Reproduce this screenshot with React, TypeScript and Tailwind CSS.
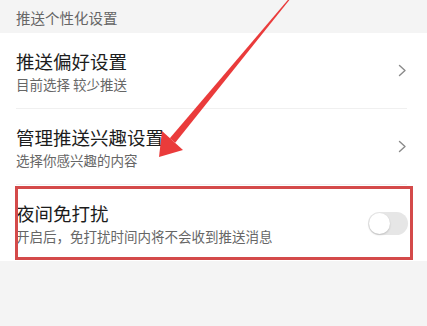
import React from "react";

const rows = [
  { title: "推送偏好设置", sub: "目前选择 较少推送", kind: "link" },
  { title: "管理推送兴趣设置", sub: "选择你感兴趣的内容", kind: "link" },
  { title: "夜间免打扰", sub: "开启后，免打扰时间内将不会收到推送消息", kind: "switch" },
];

function Chevron() {
  return (
    <svg width="9" height="13" viewBox="0 0 9 13" fill="none" className="shrink-0">
      <path d="M1.5 1.5 L7 6.5 L1.5 11.5" stroke="#8a8a8a" strokeWidth="1.4" strokeLinecap="round" strokeLinejoin="round" />
    </svg>
  );
}

function Toggle() {
  return (
    <div className="relative h-[23px] w-[40px] shrink-0 rounded-full bg-[#e6e6e6]">
      <div className="absolute left-[1px] top-[1px] size-[21px] rounded-full bg-white shadow-[0_1px_2px_rgba(0,0,0,0.18)]" />
    </div>
  );
}

export default function App() {
  return (
    <div
      className="relative h-[326px] w-[427px] overflow-hidden bg-[#f4f4f4]"
      style={{ fontFamily: '"Noto Sans CJK SC", "Noto Sans", sans-serif' }}
    >
      <div className="flex h-[33px] items-center pl-4 pt-[3px] text-[14.5px] text-[#666]">推送个性化设置</div>

      <div className="bg-white">
        {rows.map((row, i) => (
          <div
            key={row.title}
            className={`ml-4 flex h-[76px] items-center justify-between ${
              row.kind === "switch" ? "mr-[19px]" : "mr-[20px]"
            } ${i < 2 ? "border-b border-[#f0f0f0]" : ""}`}
          >
            <div className="flex flex-col">
              <p className="text-[18.5px] leading-[24px] text-[#1c1c1c]">{row.title}</p>
              <p className="mt-[2px] text-[13.5px] leading-[18px] text-[#666]">{row.sub}</p>
            </div>
            {row.kind === "link" ? <Chevron /> : <Toggle />}
          </div>
        ))}
      </div>

      {/* annotation box */}
      <div className="pointer-events-none absolute left-[15px] top-[186px] h-[74px] w-[398px] border-[3px] border-[#d44a4a]" />

      {/* annotation arrow */}
      <svg className="pointer-events-none absolute left-0 top-0" width="427" height="326" viewBox="0 0 427 326">
        <polygon points="291,-2 289.5,-2 169.8,138.3 175.2,142.7" fill="#ea3b3b" />
        <polygon points="159,157 162,131 183,150" fill="#ea3b3b" />
      </svg>
    </div>
  );
}
